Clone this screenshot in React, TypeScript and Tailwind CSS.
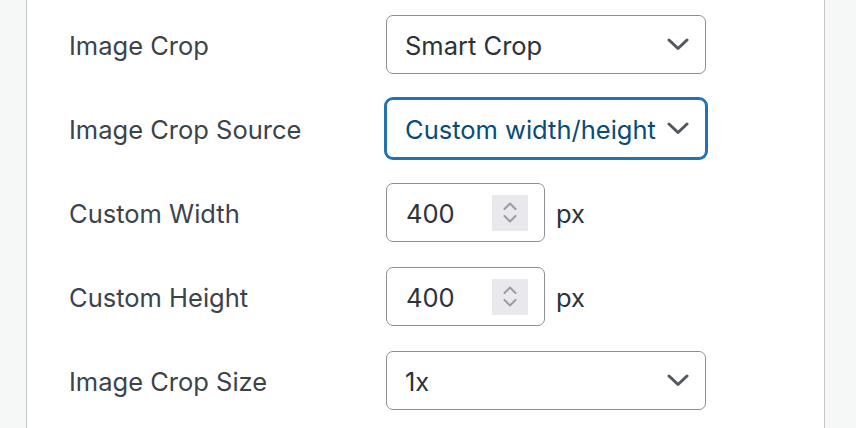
import React from 'react';

const font = { fontFamily: 'Inter, "Liberation Sans", Arial, sans-serif' };

const Chevron = () => (
  <svg width="22" height="13" viewBox="0 0 22 13" className="shrink-0">
    <path d="M2 2 L11 10.5 L20 2" fill="none" stroke="#50575e" strokeWidth="3" strokeLinecap="round" strokeLinejoin="round" />
  </svg>
);

const Spinner = () => (
  <div className="w-[36px] h-[36px] bg-[#e9e9ed] flex flex-col items-center justify-center gap-[5px]">
    <svg width="14" height="8" viewBox="0 0 14 8">
      <path d="M1.5 7 L7 1.5 L12.5 7" fill="none" stroke="#9a9aa0" strokeWidth="2" strokeLinecap="round" strokeLinejoin="round" />
    </svg>
    <svg width="14" height="8" viewBox="0 0 14 8">
      <path d="M1.5 1 L7 6.5 L12.5 1" fill="none" stroke="#9a9aa0" strokeWidth="2" strokeLinecap="round" strokeLinejoin="round" />
    </svg>
  </div>
);

const Select = ({ value, focused = false }: { value: string; focused?: boolean }) => (
  <div
    className={
      focused
        ? 'w-[320px] h-[59px] rounded-[7px] border border-[#2271b1] shadow-[0_0_0_2px_#2271b1] bg-white flex items-center justify-between pl-[18px] pr-[16px] text-[25.5px] text-[#0a4b78]'
        : 'w-[320px] h-[59px] rounded-[7px] border border-[#8c8f94] bg-white flex items-center justify-between pl-[18px] pr-[16px] text-[25.5px] text-[#2c3338]'
    }
  >
    <span className="leading-none pt-[3px]">{value}</span>
    <Chevron />
  </div>
);

const NumberInput = ({ value }: { value: string }) => (
  <div className="flex items-center gap-[11px]">
    <div className="w-[159px] h-[59px] rounded-[7px] border border-[#8c8f94] bg-white flex items-center justify-between pl-[19px] pr-[16px] text-[25.5px] text-[#2c3338]">
      <span className="leading-none pt-[3px]">{value}</span>
      <Spinner />
    </div>
    <span className="text-[25.5px] text-[#2c3338] leading-none pt-[3px]">px</span>
  </div>
);

const rows: { label: string; control: React.ReactNode }[] = [
  { label: 'Image Crop', control: <Select value="Smart Crop" /> },
  { label: 'Image Crop Source', control: <Select value="Custom width/height" focused /> },
  { label: 'Custom Width', control: <NumberInput value="400" /> },
  { label: 'Custom Height', control: <NumberInput value="400" /> },
  { label: 'Image Crop Size', control: <Select value="1x" /> },
];

export default function App() {
  return (
    <div className="w-[856px] h-[428px] flex bg-[#f6f7f7] overflow-hidden" style={font}>
      <div className="w-[26px] shrink-0" />
      <div className="w-[799px] h-full bg-white border-x border-[#c3c4c7] pt-[15px] pl-[42px]">
        <div className="flex flex-col gap-[25px]">
          {rows.map((r) => (
            <div key={r.label} className="flex items-center h-[59px]">
              <div className="w-[317px] text-[25.5px] text-[#3c434a] leading-none pt-[3px]">{r.label}</div>
              {r.control}
            </div>
          ))}
        </div>
      </div>
    </div>
  );
}
